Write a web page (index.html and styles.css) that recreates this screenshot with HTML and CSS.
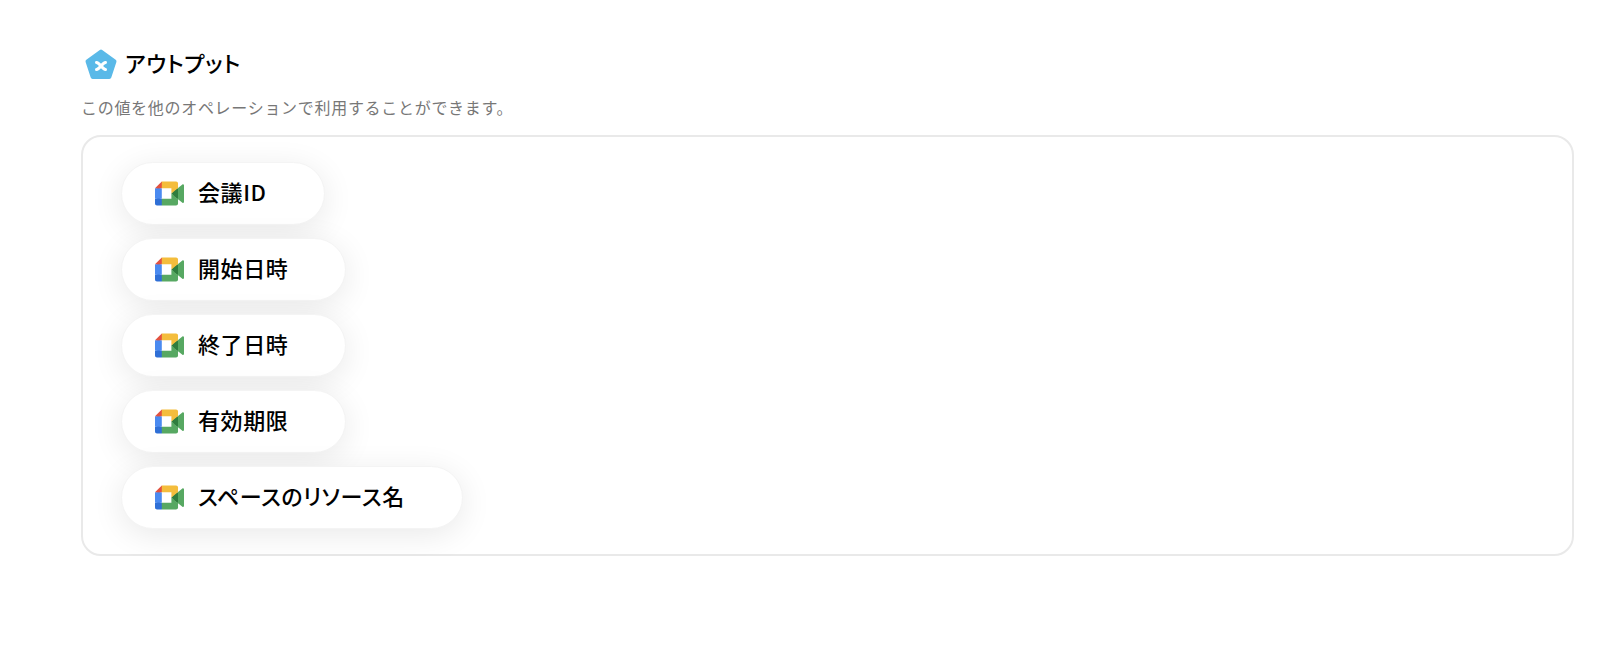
FILE: index.html
```html
<!DOCTYPE html>
<html lang="ja">
<head>
<meta charset="utf-8">
<title>アウトプット</title>
<link rel="stylesheet" href="styles.css">
</head>
<body>
<svg class="defs" width="0" height="0" aria-hidden="true">
  <symbol id="meet" viewBox="0 0 87.5 72">
    <path fill="#2f7d3e" d="M49.5 36l8.53 9.75 11.47 7.33 2-17.02-2-16.64-11.69 6.44z"/>
    <path fill="#2f6fd6" d="M0 51.5V66c0 3.315 2.685 6 6 6h14.5l3-10.96-3-9.54-9.95-3z"/>
    <path fill="#e2513f" d="M20.5 0L0 20.5l10.55 3 9.95-3 2.95-9.41z"/>
    <path fill="#4a8af0" d="M20.5 20.5H0v31h20.5z"/>
    <path fill="#57a862" d="M82.6 8.68L69.5 19.42v33.66l13.16 10.79c1.97 1.54 4.85.135 4.85-2.37V11c0-2.535-2.945-3.925-4.91-2.32zM49.5 36v15.5h-29V72h43c3.315 0 6-2.685 6-6V53.08z"/>
    <path fill="#f4bd3c" d="M63.5 0h-43v20.5h29V36l20-16.57V6c0-3.315-2.685-6-6-6z"/>
  </symbol>
</svg>
<main class="page">
  <header class="heading">
    <svg class="badge" viewBox="0 0 32 32" aria-hidden="true">
      <path fill="#5ab9e8" stroke="#5ab9e8" stroke-width="4" stroke-linejoin="round" d="M16 2.5 29.5 12.400 24.400 28H7.600L2.500 12.400z"/>
      <path fill="none" stroke="#fff" stroke-width="3" stroke-linecap="round" d="M11.500 13.500c3 .3 6 6.700 9 7M20.500 13.500c-3 .3-6 6.700-9 7"/>
    </svg>
    <h1 class="title">アウトプット</h1>
  </header>
  <p class="note">この値を他のオペレーションで利用することができます。</p>
  <section class="panel">
    <div class="pill"><svg class="meet"><use href="#meet"/></svg><span>会議ID</span></div>
    <div class="pill"><svg class="meet"><use href="#meet"/></svg><span>開始日時</span></div>
    <div class="pill"><svg class="meet"><use href="#meet"/></svg><span>終了日時</span></div>
    <div class="pill"><svg class="meet"><use href="#meet"/></svg><span>有効期限</span></div>
    <div class="pill"><svg class="meet"><use href="#meet"/></svg><span>スペースのリソース名</span></div>
  </section>
</main>
</body>
</html>
```
FILE: styles.css
```css
* { box-sizing: border-box; }
html, body { margin: 0; background: #fff; }
body {
  font-family: "Noto Sans CJK JP", "Noto Sans", sans-serif;
  color: #000;
}
.defs { display: block; height: 0; }
.page { padding: 49px 26px 0 81px; }
.heading {
  display: flex;
  align-items: center;
  gap: 8px;
  height: 32px;
  padding-left: 4px;
}
.badge { width: 32px; height: 32px; flex: none; }
.title {
  margin: 0 0 6px;
  font-size: 22px;
  font-weight: 500;
  line-height: 28px;
  letter-spacing: 0.7px;
  font-feature-settings: "palt";
}
.note {
  margin: 14px 0 0;
  font-size: 16px;
  line-height: 24px;
  color: #777;
  letter-spacing: 0.7px;
}
.panel {
  margin-top: 16px;
  height: 421px;
  border: 2px solid #e9e9e9;
  border-radius: 20px;
  padding: 25px 38px;
  display: flex;
  flex-direction: column;
  align-items: flex-start;
  gap: 13px;
}
.pill {
  display: flex;
  align-items: center;
  gap: 14px;
  height: 63px;
  padding: 0 57px 0 33px;
  border: 1px solid #f4f4f4;
  border-radius: 32px;
  background: #fff;
  box-shadow: 0 6px 32px rgba(0, 0, 0, 0.09);
  font-size: 22px;
  font-weight: 500;
  letter-spacing: 0.6px;
  font-feature-settings: "palt";
  white-space: nowrap;
}
.pill span { margin-bottom: 6px; }
.meet { width: 29px; height: 25px; flex: none; margin-bottom: 1px; }
```
